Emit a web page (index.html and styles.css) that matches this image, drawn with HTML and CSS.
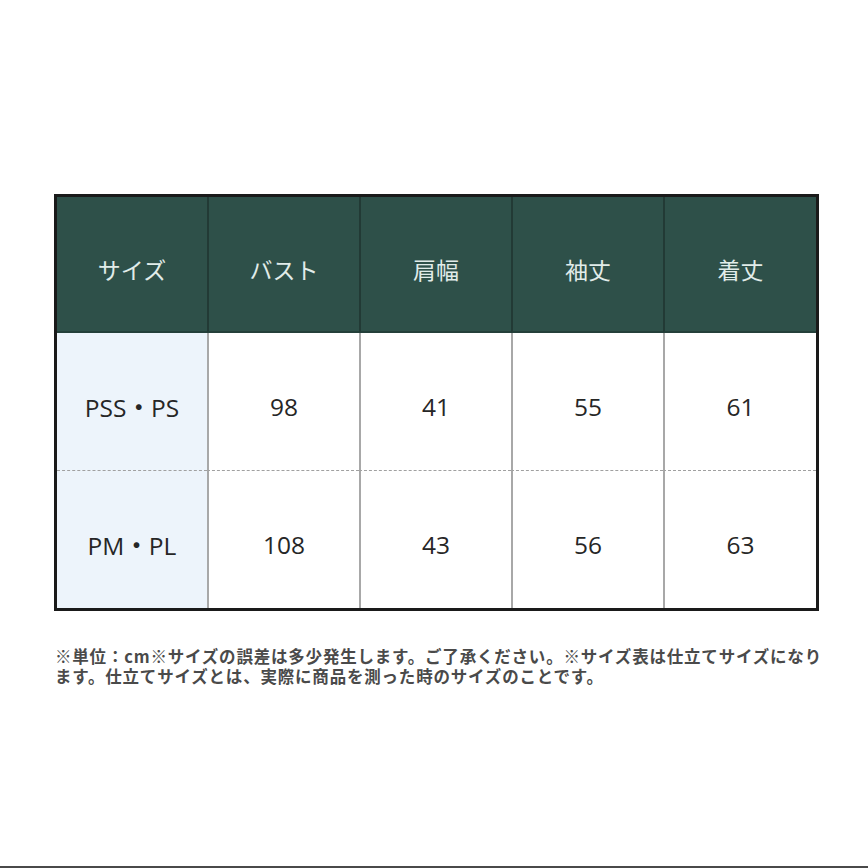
FILE: index.html
```html
<!DOCTYPE html>
<html lang="ja">
<head>
<meta charset="utf-8">
<link rel="stylesheet" href="styles.css">
</head>
<body>
<div class="page">
  <div class="table">
    <div class="cell head">サイズ</div>
    <div class="cell head">バスト</div>
    <div class="cell head">肩幅</div>
    <div class="cell head">袖丈</div>
    <div class="cell head">着丈</div>

    <div class="cell size r1">PSS・PS</div>
    <div class="cell r1">98</div>
    <div class="cell r1">41</div>
    <div class="cell r1">55</div>
    <div class="cell r1">61</div>

    <div class="cell size r2">PM・PL</div>
    <div class="cell r2">108</div>
    <div class="cell r2">43</div>
    <div class="cell r2">56</div>
    <div class="cell r2">63</div>
  </div>
  <p class="note">※単位：cm※サイズの誤差は多少発生します。ご了承ください。※サイズ表は仕立てサイズになります。仕立てサイズとは、実際に商品を測った時のサイズのことです。</p>
</div>
<div class="bottom-bar"></div>
</body>
</html>
```
FILE: styles.css
```css
html, body {
  margin: 0;
  padding: 0;
  background: #ffffff;
}
body {
  width: 868px;
  height: 868px;
  position: relative;
  overflow: hidden;
  font-family: "Noto Sans CJK JP", "Noto Sans", sans-serif;
}
.page {
  padding: 194px 0 0 54px;
}
.table {
  width: 765px;
  box-sizing: border-box;
  border: 3px solid #1a1a1a;
  display: grid;
  grid-template-columns: 150px 152px 152px 152px 153px;
  grid-template-rows: 136px 138px 137px;
  background: #fff;
}
.cell {
  display: flex;
  align-items: center;
  justify-content: center;
  padding-top: 10px;
  box-sizing: border-box;
  font-family: "Open Sans", "Noto Sans CJK JP", sans-serif;
  font-weight: 500;
  font-size: 24.5px;
  color: #262626;
  border-left: 2px solid #a8a8a8;
}
.cell:nth-child(5n+1) {
  border-left: none;
}
.head {
  background: #2e5049;
  color: #e1ece9;
  font-family: "Noto Sans CJK JP", sans-serif;
  font-weight: 400;
  font-size: 23px;
  border-left-color: #223a35;
  border-bottom: 2px solid #24403a;
}
.size {
  background: #edf4fb;
}
.r1 {
  border-bottom: 1px dashed #a0a0a0;
}
.note {
  margin: 35px 0 0 1px;
  width: 772px;
  font-family: "Noto Sans CJK JP", sans-serif;
  font-weight: 700;
  font-size: 16.5px;
  line-height: 20px;
  color: #4a4a4a;
  letter-spacing: 0.8px;
}
.bottom-bar {
  position: absolute;
  left: 0;
  right: 0;
  bottom: 0;
  height: 2px;
  background: #4a4a4a;
}
```
